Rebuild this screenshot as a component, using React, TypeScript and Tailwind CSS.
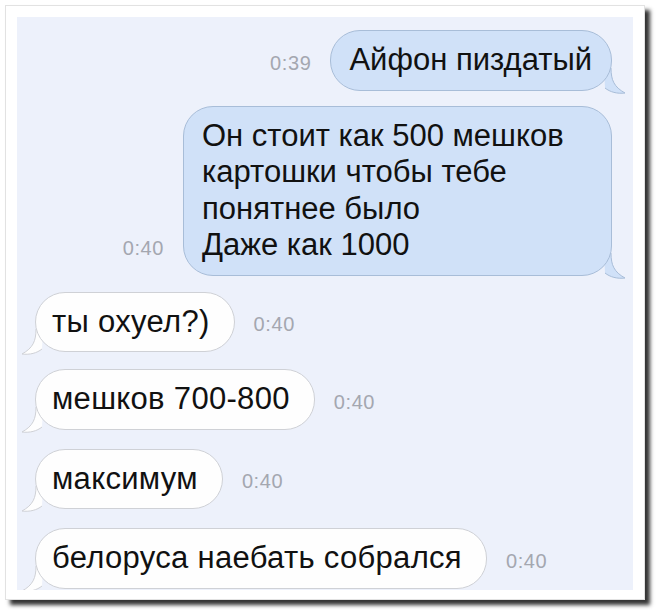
import type { ReactNode } from 'react';

const FONT = { fontFamily: '"Liberation Sans", Arial, sans-serif' };

function OutTail() {
  return (
    <svg
      className="absolute bottom-[-3px] right-[-14px]"
      width="24"
      height="26"
      viewBox="0 0 24 26"
      fill="none"
    >
      <path d="M2 0 L9 0 C9 12 12 19 23 25 C15 26 8 24 3 20 Z" fill="#d0e1f8" />
      <path d="M9 0 C9 12 12 19 23 25 C15 26 8 24 3 20" stroke="#a8bdd8" strokeWidth="1" />
    </svg>
  );
}

function InTail() {
  return (
    <svg
      className="absolute bottom-[-3px] left-[-14px]"
      width="24"
      height="26"
      viewBox="0 0 24 26"
      fill="none"
    >
      <path d="M22 0 L15 0 C15 12 12 19 1 25 C9 26 16 24 21 20 Z" fill="#fefefe" />
      <path d="M15 0 C15 12 12 19 1 25 C9 26 16 24 21 20" stroke="#cfd1d6" strokeWidth="1" />
    </svg>
  );
}

function Time({ children }: { children: ReactNode }) {
  return (
    <span className="mb-[19px] text-[20px] leading-[18px] tracking-[0.03em] text-[#a4a7b0]">
      {children}
    </span>
  );
}

function Outgoing({ time, children, className = '' }: { time: string; children: ReactNode; className?: string }) {
  return (
    <div className={`flex items-end justify-end gap-[19px] ${className}`}>
      <Time>{time}</Time>
      <div className="relative">
        <div className="relative z-10 rounded-[30px] border border-[#a8bdd8] bg-[#d0e1f8] pl-[18px] pr-[19px] py-[11px] text-[31px] leading-[36.5px] text-[#111]">
          {children}
        </div>
        <OutTail />
      </div>
    </div>
  );
}

function Incoming({ time, children, className = '' }: { time: string; children: ReactNode; className?: string }) {
  return (
    <div className={`flex items-end gap-[19px] ${className}`}>
      <div className="relative">
        <div className="relative z-10 rounded-[30px] border border-[#cfd1d6] bg-[#fefefe] pl-[16px] pr-[24px] py-[11px] text-[31px] leading-[36.5px] tracking-[0.01em] text-[#111]">
          {children}
        </div>
        <InTail />
      </div>
      <Time>{time}</Time>
    </div>
  );
}

export default function App() {
  return (
    <div className="h-[610px] w-[656px] bg-white pl-[5px] pt-[5px]" style={FONT}>
      <div className="h-[595px] w-[640px] border border-[#e2e2e2] bg-white px-[11px] pb-[9px] pt-[11px] shadow-[5px_5px_4px_rgba(0,0,0,0.8)]">
        <div className="flex h-full flex-col overflow-hidden bg-[#edf1fb] pl-[18px] pr-[21px] pt-[13px]">
          <Outgoing time="0:39">Айфон пиздатый</Outgoing>
          <Outgoing time="0:40" className="mt-[15px]">
            <div className="w-[390px]">
              Он стоит как 500 мешков
              <br />
              картошки чтобы тебе
              <br />
              понятнее было
              <br />
              Даже как 1000
            </div>
          </Outgoing>
          <Incoming time="0:40" className="mt-[16px]">ты охуел?)</Incoming>
          <Incoming time="0:40" className="mt-[17px]">мешков 700-800</Incoming>
          <Incoming time="0:40" className="mt-[19px]">максимум</Incoming>
          <Incoming time="0:40" className="mt-[19px]">белоруса наебать собрался</Incoming>
        </div>
      </div>
    </div>
  );
}
